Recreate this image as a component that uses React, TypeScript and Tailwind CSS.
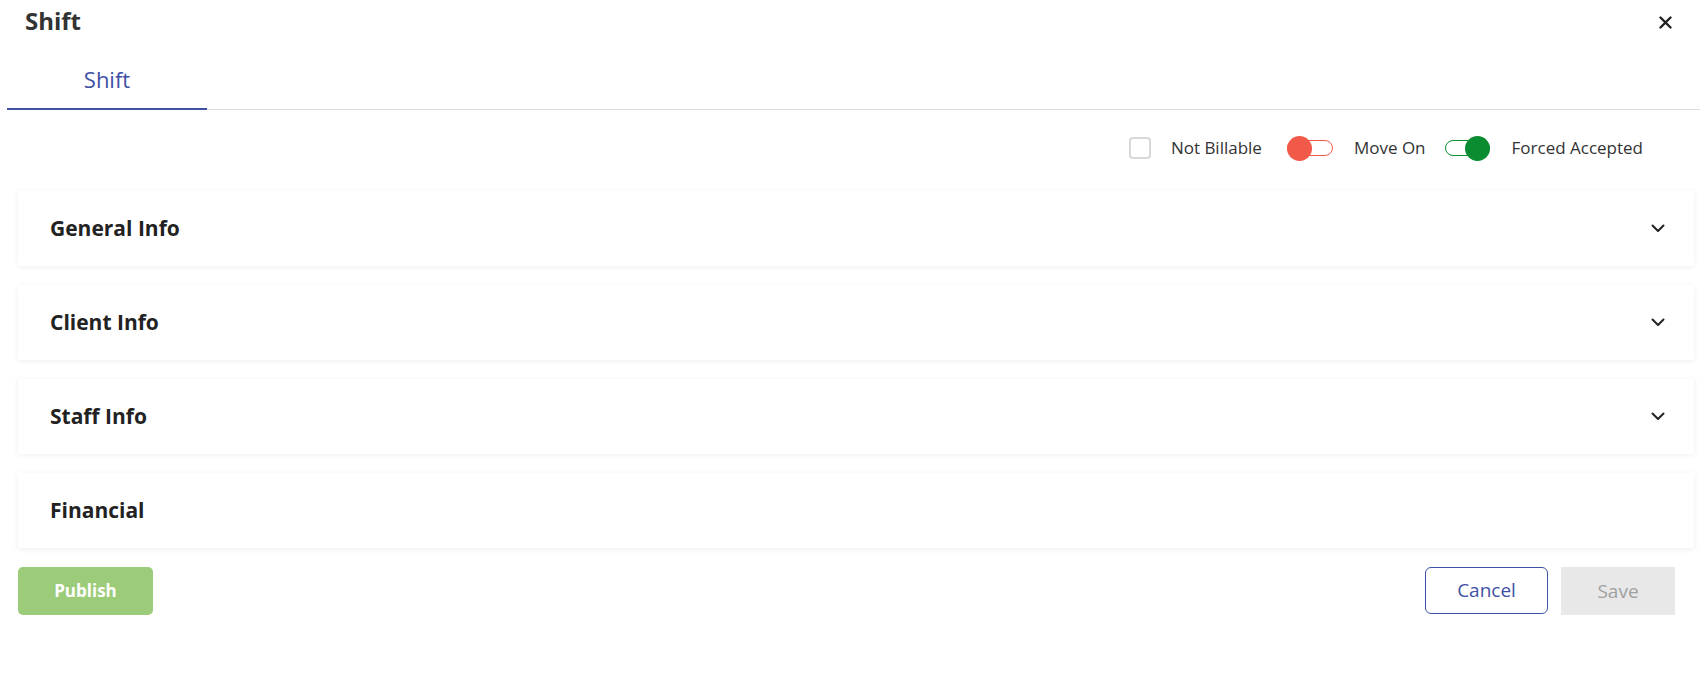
import React from "react";

function Chevron() {
  return (
    <svg width="14" height="9" viewBox="0 0 14 9" fill="none">
      <path d="M1.5 1.5L7 7L12.5 1.5" stroke="#222" strokeWidth="2" strokeLinecap="round" strokeLinejoin="round" />
    </svg>
  );
}

function Card({ title, chevron = true }: { title: string; chevron?: boolean }) {
  return (
    <div className="h-[75px] bg-white shadow-[0_1px_6px_rgba(0,0,0,0.07)] flex items-center justify-between pl-[32px] pr-[29px]">
      <span className="text-[21px] font-bold text-[#222]">{title}</span>
      {chevron && <Chevron />}
    </div>
  );
}

export default function App() {
  return (
    <div className="w-full h-[699px] bg-white font-['Open_Sans',sans-serif] text-[#333]">
      <div className="h-[50px] flex items-start justify-between pl-[25px] pr-[34px]">
        <span className="mt-[5px] leading-[32px] text-[24px] font-bold text-[#333]">Shift</span>
        <svg className="mt-[16px]" width="13" height="13" viewBox="0 0 13 13">
          <path d="M1.5 1.5L11.5 11.5M11.5 1.5L1.5 11.5" stroke="#222" strokeWidth="2.4" strokeLinecap="round" />
        </svg>
      </div>
      <div className="ml-[7px] mr-[6px] flex border-b border-[#dddddd]">
        <div className="w-[200px] h-[60px] flex items-center justify-center text-[22px] text-[#3f51a5] border-b-2 border-[#3f51a5] -mb-px">
          Shift
        </div>
      </div>
      <div className="h-[40px] mt-[18px] flex items-center justify-end pr-[63px] text-[17px] text-[#333]">
        <div className="w-[22px] h-[22px] rounded-[4px] border-2 border-[#d8d8d8]" />
        <span className="ml-[20px]">Not Billable</span>
        <div className="ml-[25px] relative w-[46px] h-[25px] flex items-center">
          <div className="w-full h-[16px] rounded-full border border-[#f15a48] bg-white" />
          <div className="absolute left-0 top-0 w-[25px] h-[25px] rounded-full bg-[#f15a48]" />
        </div>
        <span className="ml-[21px]">Move On</span>
        <div className="ml-[19px] relative w-[45px] h-[25px] flex items-center">
          <div className="w-full h-[16px] rounded-full border border-[#0b8c30] bg-white" />
          <div className="absolute right-0 top-0 w-[25px] h-[25px] rounded-full bg-[#0b8c30]" />
        </div>
        <span className="ml-[22px]">Forced Accepted</span>
      </div>
      <div className="mt-[23px] ml-[18px] mr-[12px] flex flex-col gap-[19px]">
        <Card title="General Info" />
        <Card title="Client Info" />
        <Card title="Staff Info" />
        <Card title="Financial" chevron={false} />
      </div>
      <div className="mt-[19px] ml-[18px] mr-[31px] flex items-center justify-between">
        <button className="w-[135px] h-[48px] rounded-[5px] bg-[#9ccb7a] text-white text-[17px] font-bold">Publish</button>
        <div className="flex gap-[13px]">
          <button className="w-[123px] h-[47px] rounded-[6px] border border-[#3f51a5] text-[#3f51a5] text-[19px] font-medium bg-white">Cancel</button>
          <button className="w-[114px] h-[48px] bg-[#e8e8e8] text-[#a0a0a0] text-[19px] font-medium">Save</button>
        </div>
      </div>
    </div>
  );
}
